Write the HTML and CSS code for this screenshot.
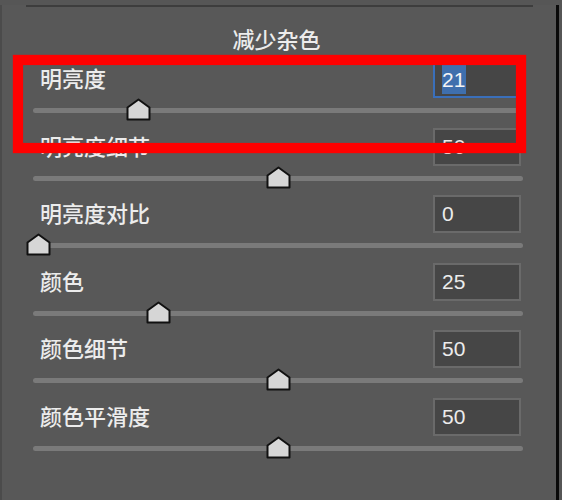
FILE: index.html
```html
<!DOCTYPE html>
<html lang="zh-CN">
<head>
<meta charset="utf-8">
<title>减少杂色</title>
<link rel="stylesheet" href="styles.css">
</head>
<body>
<div class="panel">
  <div class="sep"></div>
  <div class="title">减少杂色</div>
  <div class="rows">
    <div class="row">
      <div class="head">
        <span class="label">明亮度</span>
        <div class="field focus"><span class="sel">21</span></div>
      </div>
      <div class="slider"><div class="track"></div>
        <svg class="thumb" style="left:93.3px" viewBox="0 0 25 23" width="25" height="23"><path d="M1.5 21.5 V9.5 L12.5 1.5 L23.5 9.5 V21.5 Z"/></svg>
      </div>
    </div>
    <div class="row">
      <div class="head">
        <span class="label">明亮度细节</span>
        <div class="field">50</div>
      </div>
      <div class="slider"><div class="track"></div>
        <svg class="thumb" style="left:232.5px" viewBox="0 0 25 23" width="25" height="23"><path d="M1.5 21.5 V9.5 L12.5 1.5 L23.5 9.5 V21.5 Z"/></svg>
      </div>
    </div>
    <div class="row">
      <div class="head">
        <span class="label">明亮度对比</span>
        <div class="field">0</div>
      </div>
      <div class="slider"><div class="track"></div>
        <svg class="thumb" style="left:-7.5px" viewBox="0 0 25 23" width="25" height="23"><path d="M1.5 21.5 V9.5 L12.5 1.5 L23.5 9.5 V21.5 Z"/></svg>
      </div>
    </div>
    <div class="row">
      <div class="head">
        <span class="label">颜色</span>
        <div class="field">25</div>
      </div>
      <div class="slider"><div class="track"></div>
        <svg class="thumb" style="left:112.5px" viewBox="0 0 25 23" width="25" height="23"><path d="M1.5 21.5 V9.5 L12.5 1.5 L23.5 9.5 V21.5 Z"/></svg>
      </div>
    </div>
    <div class="row">
      <div class="head">
        <span class="label">颜色细节</span>
        <div class="field">50</div>
      </div>
      <div class="slider"><div class="track"></div>
        <svg class="thumb" style="left:232.5px" viewBox="0 0 25 23" width="25" height="23"><path d="M1.5 21.5 V9.5 L12.5 1.5 L23.5 9.5 V21.5 Z"/></svg>
      </div>
    </div>
    <div class="row">
      <div class="head">
        <span class="label">颜色平滑度</span>
        <div class="field">50</div>
      </div>
      <div class="slider"><div class="track"></div>
        <svg class="thumb" style="left:232.5px" viewBox="0 0 25 23" width="25" height="23"><path d="M1.5 21.5 V9.5 L12.5 1.5 L23.5 9.5 V21.5 Z"/></svg>
      </div>
    </div>
  </div>
  <div class="highlight"></div>
</div>
</body>
</html>
```
FILE: styles.css
```css
html, body {
  margin: 0;
  padding: 0;
}
body {
  width: 562px;
  height: 500px;
  overflow: hidden;
  background: #565656;
  font-family: "Liberation Sans", "Noto Sans CJK SC", sans-serif;
  color: #ebebeb;
}
.panel {
  position: relative;
  width: 559px;
  height: 500px;
  box-sizing: border-box;
  border-left: 2px solid #4b4b4b;
  border-right: 3px solid #0a0a0a;
  background: #585858;
}
.sep {
  margin: 5px 0 0 24px;
  width: 507px;
  height: 2px;
  background: #3d3d3d;
}
.title {
  margin-top: 18px;
  padding-right: 5px;
  height: 26px;
  line-height: 26px;
  text-align: center;
  font-family: "Noto Sans CJK SC", sans-serif;
  font-weight: 500;
  font-size: 22px;
  color: #ececec;
}
.rows {
  margin-top: 9px;
  display: flex;
  flex-direction: column;
}
.row {
  height: 67.6px;
  display: flex;
  flex-direction: column;
}
.head {
  height: 38px;
  display: flex;
  align-items: center;
  justify-content: space-between;
  padding-left: 38px;
  padding-right: 35px;
}
.label {
  font-family: "Noto Sans CJK SC", sans-serif;
  font-weight: 500;
  font-size: 22px;
  line-height: 26px;
  margin-bottom: 4px;
  color: #ececec;
}
.field {
  width: 88px;
  height: 38px;
  box-sizing: border-box;
  border: 2px solid #6a6a6a;
  background: #464646;
  display: flex;
  align-items: center;
  padding-left: 7px;
  font-size: 21px;
  color: #ececec;
}
.field.focus {
  border-color: #3a6fba;
}
.sel {
  background: #3f6fad;
  line-height: 29px;
  color: #f4f4f4;
  padding-right: 1px;
}
.slider {
  position: relative;
  margin-left: 31px;
  width: 490px;
  height: 23px;
}
.track {
  margin-top: 10px;
  height: 5px;
  border-radius: 3px;
  background: #7a7a7a;
}
.thumb {
  position: absolute;
  top: 0;
  display: block;
}
.thumb path {
  fill: #d6d6d6;
  stroke: #111;
  stroke-width: 2;
  stroke-linejoin: round;
}
.highlight {
  position: absolute;
  left: 11px;
  top: 50px;
  width: 513px;
  height: 98px;
  box-sizing: border-box;
  border: 10px solid #fe0000;
  box-shadow: 0 0 1px #ff0000, inset 0 0 1px #ff0000;
}
```
